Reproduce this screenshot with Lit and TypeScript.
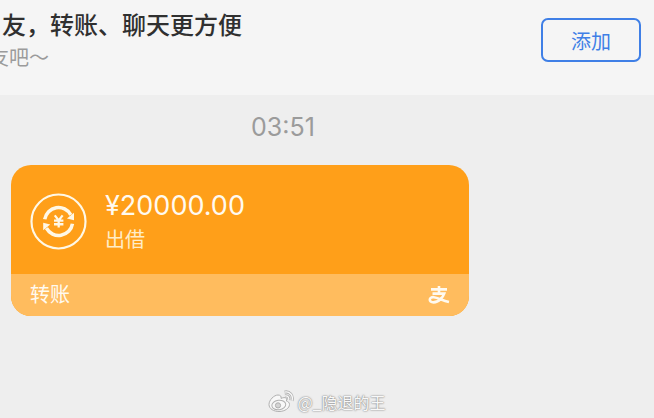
import { LitElement, html, css } from "lit";
import { customElement } from "lit/decorators.js";

@customElement("transfer-card")
class TransferCard extends LitElement {
  static styles = css`
    :host {
      display: block;
      border-radius: 20px;
      overflow: hidden;
      background: #ff9f19;
      color: #fffaf0;
    }
    .main {
      display: flex;
      align-items: center;
      gap: 18px;
      padding: 23px 19px 20px;
    }
    .coin {
      flex: none;
      width: 57px;
      height: 57px;
    }
    .amount {
      font-size: 27px;
      line-height: 36px;
    }
    .note {
      margin-top: 2px;
      font-size: 20px;
      line-height: 28px;
      color: #ffedc8;
    }
    .foot {
      display: flex;
      align-items: center;
      justify-content: space-between;
      padding: 7px 19px;
      background: #ffbc5e;
      font-size: 20px;
      line-height: 28px;
    }
    .pay {
      width: 22px;
      height: 20px;
    }
  `;

  render() {
    return html`
      <div class="main">
        <svg class="coin" viewBox="0 0 58 58" fill="none" stroke="#fff8e6" aria-hidden="true">
          <circle cx="29" cy="29" r="27.5" stroke-width="2.2" />
          <g stroke-width="3.6">
            <path d="M15 26.8A14.2 14.2 0 0 1 41.5 22.2" />
            <path d="M43.2 31.2A14.2 14.2 0 0 1 16.7 35.8" />
          </g>
          <g fill="#fff8e6" stroke="none">
            <path d="M44.8 20V27.8L37.6 26Z" />
            <path d="M13.4 38V30.2L20.6 32Z" />
          </g>
          <path d="M25.2 22.8L29.2 28L33.2 22.8M29.2 28V35.2M24.4 28.2H34M24.4 31.8H34" stroke-width="2.3" />
        </svg>
        <div>
          <div class="amount">¥20000.00</div>
          <div class="note">出借</div>
        </div>
      </div>
      <div class="foot">
        <span>转账</span>
        <svg class="pay" viewBox="0 0 22 20" fill="none" stroke="#fffaf0" stroke-width="2.6" aria-label="支付宝" role="img">
          <path d="M3 4.4H19M11 1V8.4M4.5 8.6H16.2C15 12 11 17.4 5.6 17.4C2.8 17.4 1.8 16 1.8 14.8C1.8 13 3.4 12 5.8 12.2C10 12.6 14 15.4 21 17" />
        </svg>
      </div>
    `;
  }
}

@customElement("app-root")
class AppRoot extends LitElement {
  static styles = css`
    :host {
      display: flex;
      flex-direction: column;
      min-height: 100vh;
      overflow: hidden;
      background: #eeeeee;
      font-family: Inter, "Noto Sans CJK SC", sans-serif;
    }
    .banner {
      display: flex;
      align-items: flex-start;
      justify-content: space-between;
      padding: 8px 13px 23px 2px;
      background: #f5f5f5;
    }
    .title {
      margin: 0;
      font-size: 24px;
      font-weight: 500;
      line-height: 36px;
      color: #303030;
    }
    .sub {
      margin: 0 0 0 -13px;
      font-size: 20px;
      line-height: 28px;
      color: #9b9b9b;
    }
    .add {
      box-sizing: border-box;
      width: 100px;
      height: 44px;
      margin-top: 10px;
      padding: 0;
      border: 2px solid #3f7fe6;
      border-radius: 7px;
      background: transparent;
      color: #3f7fe6;
      font: inherit;
      font-size: 20px;
    }
    .chat {
      flex: 1;
      padding: 16px 11px 0;
    }
    .time {
      display: block;
      margin-bottom: 22px;
      padding-right: 88px;
      text-align: center;
      font-size: 25px;
      line-height: 32px;
      color: #9b9b9b;
    }
    transfer-card {
      width: 70vw;
    }
    .mark {
      display: flex;
      align-items: center;
      justify-content: center;
      gap: 3px;
      padding-bottom: 4px;
      font-family: "Noto Sans CJK SC", sans-serif;
      font-size: 16px;
      line-height: 24px;
      color: #f8f8f8;
      text-shadow: 0 0 2px #777777, 0 0 1px #999999;
    }
    .weibo {
      width: 26px;
      height: 24px;
    }
  `;

  render() {
    return html`
      <header class="banner">
        <div>
          <h1 class="title">友，转账、聊天更方便</h1>
          <p class="sub">友吧～</p>
        </div>
        <button class="add" type="button">添加</button>
      </header>
      <main class="chat">
        <time class="time">03:51</time>
        <transfer-card></transfer-card>
      </main>
      <footer class="mark">
        <svg class="weibo" viewBox="0 0 26 24" fill="#f8f8f8" stroke="#b0b0b0" stroke-width="1" aria-hidden="true">
          <path d="M10 5C6 5 1 10 1 14.5C1 19 6 21.5 11 21.5C17 21.5 21.5 18 21.5 14.5C21.5 12.5 20 11.4 18.4 11C19.4 8 17.6 6.6 13 8.4C13.6 6.4 12.4 5 10 5Z" />
          <ellipse cx="10.8" cy="15" rx="7" ry="4.8" transform="rotate(-8 10.8 15)" />
          <circle cx="10" cy="15.4" r="2.6" fill="#d4d4d4" />
          <path d="M17 5.9C19.8 5.5 21.4 7.5 20.6 9.9M16.4 2.1C21.6 0.9 25.6 5.5 24 10.7" fill="none" stroke-width="3" />
          <path d="M17 5.9C19.8 5.5 21.4 7.5 20.6 9.9M16.4 2.1C21.6 0.9 25.6 5.5 24 10.7" fill="none" stroke="#f8f8f8" stroke-width="1.4" />
        </svg>
        <span>@_隐退的王</span>
      </footer>
    `;
  }
}
